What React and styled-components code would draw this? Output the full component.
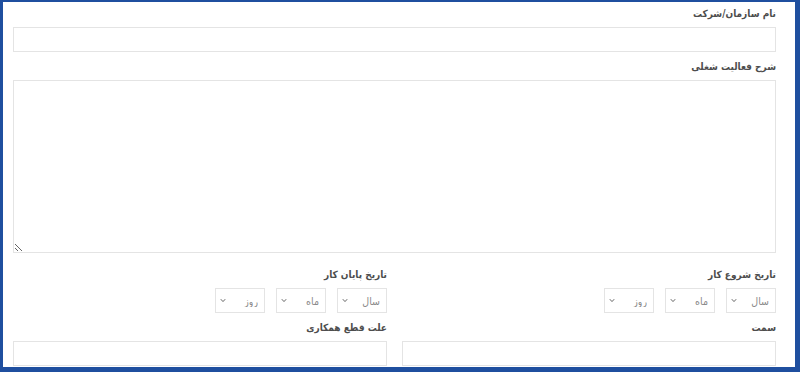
import React from 'react'
import styled, {createGlobalStyle} from 'styled-components'

const GlobalStyle = createGlobalStyle`
  html, body {
    margin: 0;
    padding: 0;
    background: #fff;
  }
  * {
    box-sizing: border-box;
  }
`

const Frame = styled.div`
  width: 800px;
  height: 372px;
  overflow: hidden;
  border-style: solid;
  border-color: #1f4f9f;
  border-width: 2px 5px 5px 3px;
  background: #fff;
  padding: 4px 19px 0 10px;
  direction: rtl;
  font-family: "DejaVu Sans Condensed", "DejaVu Sans", sans-serif;
`

const Field = styled.div`
  display: flex;
  flex-direction: column;
  margin-bottom: ${props => props.$gap || 7}px;
`

const Label = styled.label`
  display: block;
  font-size: 10px;
  font-weight: bold;
  line-height: 16px;
  color: #4d4d4d;
  margin-bottom: 5px;
`

const TextInput = styled.input`
  display: block;
  width: 100%;
  height: 25px;
  border: 1px solid #e4e4e4;
  border-radius: 0;
  outline: none;
  background: #fff;
  font-family: inherit;
`

const TextArea = styled.textarea`
  display: block;
  width: 100%;
  height: 173px;
  border: 1px solid #e4e4e4;
  border-radius: 0;
  outline: none;
  background: #fff;
  font-family: inherit;
  resize: vertical;
`

const Columns = styled.div`
  display: grid;
  grid-template-columns: 1fr 1fr;
  column-gap: 15px;
`

const DateRow = styled.div`
  display: flex;
  gap: 11px;
`

const SelectWrap = styled.div`
  position: relative;
  width: 50px;
  height: 25px;
`

const Select = styled.select`
  appearance: none;
  -webkit-appearance: none;
  width: 100%;
  height: 100%;
  border: 1px solid #e4e4e4;
  border-radius: 0;
  background: #fff;
  color: #8a8a8a;
  font-family: inherit;
  font-size: 10.5px;
  padding: 0 6px 0 0;
  direction: rtl;
  outline: none;
`

const Chevron = styled.svg`
  position: absolute;
  left: 5px;
  top: 10px;
  width: 6px;
  height: 5px;
  pointer-events: none;
`

const DateSelect = ({placeholder}) => (
  <SelectWrap>
    <Select defaultValue="">
      <option value="">{placeholder}</option>
    </Select>
    <Chevron viewBox="0 0 6 5">
      <path d="M0.8 1.2 L3 3.6 L5.2 1.2" fill="none" stroke="#666" strokeWidth="1" />
    </Chevron>
  </SelectWrap>
)

const DatePicker = () => (
  <DateRow>
    <DateSelect placeholder="سال" />
    <DateSelect placeholder="ماه" />
    <DateSelect placeholder="روز" />
  </DateRow>
)

const App = () => (
  <>
    <GlobalStyle />
    <Frame>
      <Field>
        <Label>نام سازمان/شرکت</Label>
        <TextInput type="text" />
      </Field>
      <Field $gap={14}>
        <Label>شرح فعالیت شغلی</Label>
        <TextArea dir="rtl" />
      </Field>
      <Columns>
        <Field>
          <Label>تاریخ شروع کار</Label>
          <DatePicker />
        </Field>
        <Field>
          <Label>تاریخ پایان کار</Label>
          <DatePicker />
        </Field>
        <Field>
          <Label>سمت</Label>
          <TextInput type="text" />
        </Field>
        <Field>
          <Label>علت قطع همکاری</Label>
          <TextInput type="text" />
        </Field>
      </Columns>
    </Frame>
  </>
)

export default App
